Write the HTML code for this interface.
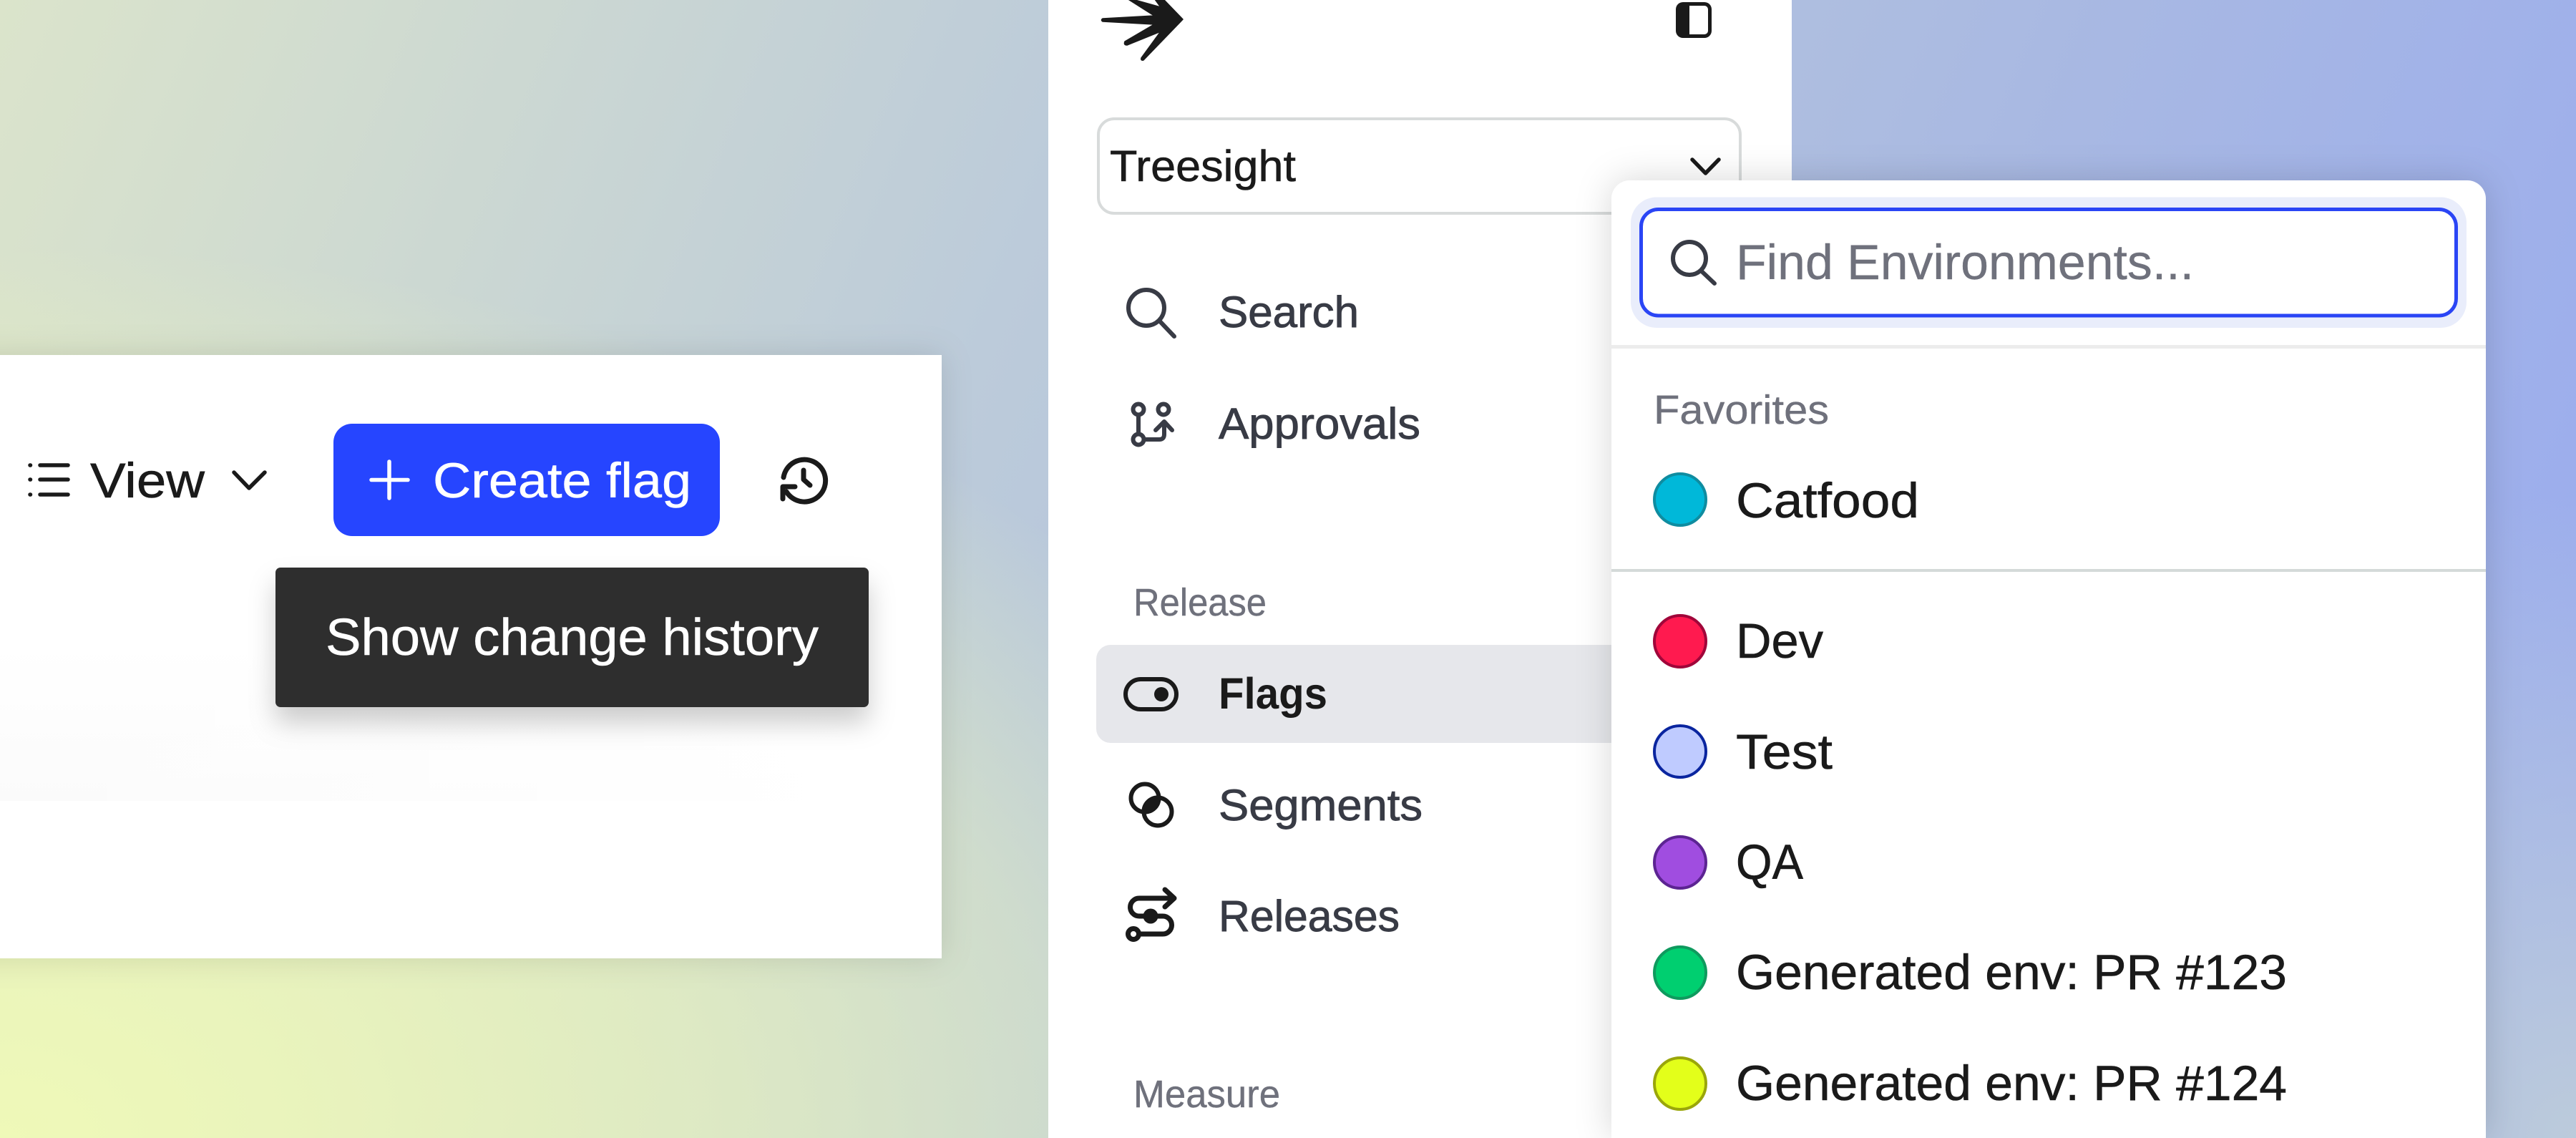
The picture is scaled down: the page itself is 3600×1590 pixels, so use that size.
<!DOCTYPE html>
<html><head><meta charset="utf-8"><title>Treesight flags</title>
<style>
html,body{margin:0;padding:0;width:3600px;height:1590px;overflow:hidden}
body{position:relative;background:
radial-gradient(2000px 1250px at 0 1590px,#eff9b8 0,rgba(239,249,184,.65) 50%,rgba(239,249,184,.42) 75%,rgba(239,249,184,0) 100%),
radial-gradient(900px 900px at 3600px 1590px,#bccbdb 0,rgba(188,203,219,0) 100%),
linear-gradient(112deg,#dbe4cb 0,#bccbda 37%,#a9b9e2 68%,#98aaf0 100%)}
svg{position:absolute;left:0;top:0;display:block}
text{font-family:"Liberation Sans",sans-serif;fill:#1a1a1a;stroke:#1a1a1a;stroke-width:.6}
text.w{fill:#fff;stroke:#fff}
text.g{fill:#6f717c;stroke:#6f717c;stroke-width:.4}
text.n{fill:#383b45;stroke:#383b45;stroke-width:.9}
.i{fill:none;stroke-linecap:round;stroke-linejoin:round}
</style></head><body>
<svg width="3600" height="1590" viewBox="0 0 3600 1590" xmlns="http://www.w3.org/2000/svg">
<defs>
<filter id="s1" x="-10%" y="-20%" width="120%" height="140%"><feDropShadow dx="0" dy="0" stdDeviation="22" flood-color="#000" flood-opacity=".12"/></filter>
<filter id="s2" x="-15%" y="-30%" width="130%" height="170%"><feDropShadow dx="0" dy="22" stdDeviation="18" flood-color="#000" flood-opacity=".2"/></filter>
<filter id="s3" x="-10%" y="-10%" width="120%" height="120%"><feDropShadow dx="0" dy="0" stdDeviation="25" flood-color="#000" flood-opacity=".16"/></filter>
<linearGradient id="band" x1="0" y1="0" x2="0" y2="1"><stop offset="0" stop-color="#fbfbfb" stop-opacity="0"/><stop offset="1" stop-color="#fbfbfb"/></linearGradient>
<linearGradient id="bandx" x1="0" y1="0" x2="1" y2="0"><stop offset="0" stop-color="#fff" stop-opacity="0"/><stop offset="1" stop-color="#fff"/></linearGradient>
<clipPath id="c1"><circle cx="1600" cy="1115" r="22.500"/></clipPath>
</defs>

<!-- left panel -->
<rect x="-60" y="496" width="1376" height="843" fill="#fff" filter="url(#s1)"/>
<rect x="0" y="900" width="1200" height="219" fill="url(#band)"/>
<rect x="0" y="900" width="1200" height="219" fill="url(#bandx)"/>

<g class="i" stroke="#1a1a1a" stroke-width="5.5">
<path d="M56 650H95M56 670H95M56 691H95"/>
<path d="M42 650h.5M42 670h.5M42 691h.5"/>
<path d="M327 660L348 682L370 660"/>
</g>
<text x="126" y="695" font-size="69" textLength="160" lengthAdjust="spacingAndGlyphs">View</text>

<rect x="466" y="592" width="540" height="157" rx="26" fill="#2645ff"/>
<path class="i" stroke="#fff" stroke-width="5.5" d="M544 645V696M519 670.500H570"/>
<text class="w" x="605" y="695" font-size="69" textLength="361" lengthAdjust="spacingAndGlyphs">Create flag</text>

<g class="i" stroke="#1a1a1a" stroke-width="7">
<path d="M1095 667A29.500 29.500 0 1 1 1099 687"/>
<path d="M1111 680H1094V697"/>
<path d="M1123 657V670L1132 678"/>
</g>

<rect x="385" y="793" width="829" height="195" rx="7" fill="#2d2d2d" filter="url(#s2)"/>
<text class="w" x="455" y="915" font-size="72" textLength="689" lengthAdjust="spacingAndGlyphs">Show change history</text>

<!-- sidebar -->
<rect x="1465" y="0" width="1039" height="1590" fill="#fff"/>
<path fill="#1a1a1a" stroke="#1a1a1a" stroke-width="1.500" stroke-linejoin="round" d="M1653 27L1598 84Q1594 85 1595 81L1622 44L1575 63Q1570 63 1572 58L1613 34L1541 30Q1538 28 1541 26L1613 22L1572 -4L1622 10L1595 -27L1598 -30Z"/>
<path fill-rule="evenodd" fill="#1a1a1a" d="M2352 3H2382A10 10 0 0 1 2392 13V43A10 10 0 0 1 2382 53H2352A10 10 0 0 1 2342 43V13A10 10 0 0 1 2352 3ZM2361 8V48H2382A5 5 0 0 0 2387 43V13A5 5 0 0 0 2382 8Z"/>

<rect x="1535" y="166" width="897" height="132" rx="22" fill="#fff" stroke="#d8dbdb" stroke-width="4"/>
<text x="1551" y="253" font-size="61" textLength="260" lengthAdjust="spacingAndGlyphs">Treesight</text>
<path class="i" stroke="#1a1a1a" stroke-width="5.500" d="M2365 223L2383.500 242L2402 223"/>

<g class="i" stroke="#383b45" stroke-width="6">
<circle cx="1602" cy="430" r="25"/>
<path d="M1621 449L1641 470"/>
<circle cx="1591" cy="572" r="7.500"/><circle cx="1626" cy="572" r="7.500"/><circle cx="1591" cy="614" r="7.500"/>
<path d="M1591 580V606M1599 614H1620Q1627 614 1627 607V590M1615 601L1627 589L1638 601"/>
</g>
<text class="n" x="1703" y="457" font-size="61" textLength="196" lengthAdjust="spacingAndGlyphs">Search</text>
<text class="n" x="1703" y="613" font-size="61" textLength="282" lengthAdjust="spacingAndGlyphs">Approvals</text>

<text class="g" x="1584" y="860" font-size="54" textLength="186" lengthAdjust="spacingAndGlyphs">Release</text>
<rect x="1532" y="901" width="760" height="137" rx="20" fill="#e6e7eb"/>

<g class="i" stroke="#1a1a1a" stroke-width="6">
<rect x="1573" y="949" width="71" height="42" rx="21"/>
<circle cx="1618" cy="1134" r="19.500"/>
<circle cx="1600" cy="1115" r="19.500"/>
<g stroke-width="7">
<path d="M1592 1305H1625A12.500 12.500 0 0 0 1625 1280H1592A12.500 12.500 0 0 1 1592 1255H1640M1628 1243L1641 1255L1628 1267"/>
<circle cx="1584" cy="1305" r="7.500"/>
</g>
</g>
<circle cx="1623" cy="970" r="10" fill="#1a1a1a"/>
<circle cx="1618" cy="1134" r="22.500" fill="#1a1a1a" clip-path="url(#c1)"/>
<circle cx="1608" cy="1280" r="10.500" fill="#1a1a1a"/>

<text x="1703" y="990" font-size="61" font-weight="700" textLength="152" lengthAdjust="spacingAndGlyphs" style="stroke-width:0">Flags</text>
<text class="n" x="1703" y="1146" font-size="61" textLength="285" lengthAdjust="spacingAndGlyphs">Segments</text>
<text class="n" x="1703" y="1301" font-size="61" textLength="253" lengthAdjust="spacingAndGlyphs">Releases</text>
<text class="g" x="1584" y="1547" font-size="54" textLength="205" lengthAdjust="spacingAndGlyphs">Measure</text>

<!-- dropdown -->
<path d="M2278 252H3448A26 26 0 0 1 3474 278V1590H2252V278A26 26 0 0 1 2278 252Z" fill="#fff" filter="url(#s3)"/>
<rect x="2279" y="275.500" width="1168" height="182.500" rx="36" fill="#e9edfb"/>
<rect x="2293.500" y="292.500" width="1139" height="148.500" rx="24" fill="#fff" stroke="#2a45f5" stroke-width="5"/>
<g class="i" stroke="#383b45" stroke-width="6">
<circle cx="2361" cy="361" r="23"/>
<path d="M2378 379L2396 396"/>
</g>
<text class="g" x="2426" y="390" font-size="69" textLength="640" lengthAdjust="spacingAndGlyphs">Find Environments...</text>
<rect x="2252" y="482" width="1222" height="5" fill="#ececec"/>
<text class="g" x="2311" y="592" font-size="57" textLength="245" lengthAdjust="spacingAndGlyphs">Favorites</text>
<circle cx="2348" cy="698" r="36" fill="#00b8d9" stroke="#0f8ca0" stroke-width="4"/>
<text x="2426" y="723" font-size="69" textLength="256" lengthAdjust="spacingAndGlyphs">Catfood</text>
<rect x="2252" y="795" width="1222" height="4" fill="#d4dad9"/>

<circle cx="2348" cy="896" r="36" fill="#ff1a4f" stroke="#a0063a" stroke-width="4"/>
<text x="2426" y="919" font-size="69" textLength="122" lengthAdjust="spacingAndGlyphs">Dev</text>
<circle cx="2348" cy="1050" r="36" fill="#bfcbff" stroke="#0a259f" stroke-width="4"/>
<text x="2426" y="1074" font-size="69" textLength="135" lengthAdjust="spacingAndGlyphs">Test</text>
<circle cx="2348" cy="1205" r="36" fill="#a04de0" stroke="#5c2492" stroke-width="4"/>
<text x="2426" y="1228" font-size="69" textLength="94" lengthAdjust="spacingAndGlyphs">QA</text>
<circle cx="2348" cy="1359" r="36" fill="#00cf70" stroke="#0f9a5e" stroke-width="4"/>
<text x="2426" y="1382" font-size="69" textLength="770" lengthAdjust="spacingAndGlyphs">Generated env: PR #123</text>
<circle cx="2348" cy="1514" r="36" fill="#e3ff1a" stroke="#9aa60a" stroke-width="4"/>
<text x="2426" y="1537" font-size="69" textLength="770" lengthAdjust="spacingAndGlyphs">Generated env: PR #124</text>
</svg>
</body></html>
